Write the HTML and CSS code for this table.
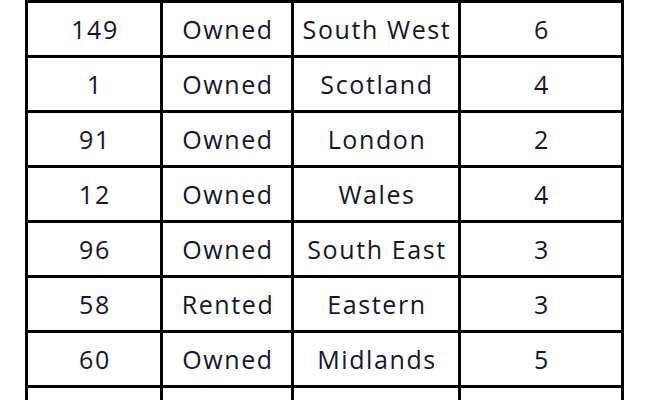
FILE: index.html
```html
<!DOCTYPE html>
<html>
<head>
<meta charset="utf-8">
<link rel="stylesheet" href="styles.css">
</head>
<body>
<table class="data">
  <colgroup>
    <col class="c1"><col class="c2"><col class="c3"><col class="c4">
  </colgroup>
  <tr><td>149</td><td>Owned</td><td>South West</td><td>6</td></tr>
  <tr><td>1</td><td>Owned</td><td>Scotland</td><td>4</td></tr>
  <tr><td>91</td><td>Owned</td><td>London</td><td>2</td></tr>
  <tr><td>12</td><td>Owned</td><td>Wales</td><td>4</td></tr>
  <tr><td>96</td><td>Owned</td><td>South East</td><td>3</td></tr>
  <tr><td>58</td><td>Rented</td><td>Eastern</td><td>3</td></tr>
  <tr><td>60</td><td>Owned</td><td>Midlands</td><td>5</td></tr>
  <tr><td>&nbsp;</td><td>&nbsp;</td><td>&nbsp;</td><td>&nbsp;</td></tr>
</table>
</body>
</html>
```
FILE: styles.css
```css
html, body {
  margin: 0;
  padding: 0;
  background: #ffffff;
  overflow: hidden;
  height: 400px;
}
.data {
  margin-left: 25px;
  border-collapse: separate;
  border-spacing: 0;
  border-left: 3px solid #000;
  border-top: 3px solid #000;
  table-layout: fixed;
  width: 599px;
  font-family: "Open Sans", sans-serif;
  font-size: 25px;
  font-weight: 500;
  letter-spacing: 1.6px;
  color: #15152b;
}
.c1 { width: 135px; }
.c2 { width: 131px; }
.c3 { width: 167px; }
.c4 { width: 163px; }
.data td {
  box-sizing: border-box;
  height: 55px;
  padding: 0 0 0 2px;
  line-height: 30px;
  border-right: 3px solid #000;
  border-bottom: 3px solid #000;
  text-align: center;
  vertical-align: middle;
  white-space: nowrap;
}
```
